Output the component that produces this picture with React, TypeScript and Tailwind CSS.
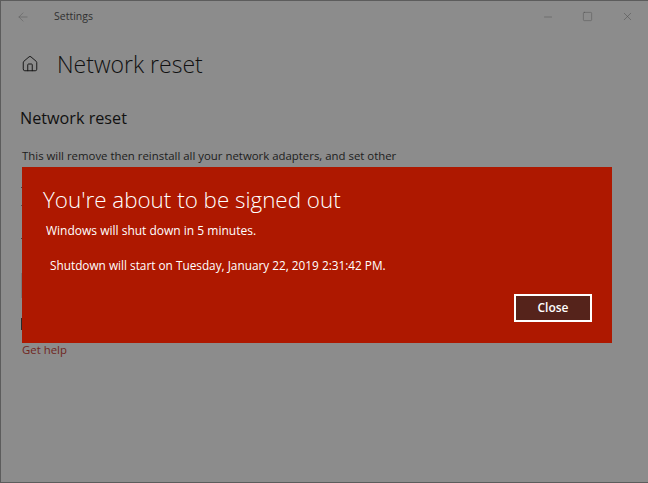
import { ArrowLeft, Home, Minus, Square, X } from 'lucide-react';

const segoe = 'font-["Open_Sans","Liberation_Sans",sans-serif]';

export default function App() {
  return (
    <div className={`relative w-[648px] h-[483px] overflow-hidden bg-[#8c8c8c] border-l border-t border-b border-[#5c5c5c] ${segoe}`}>
      <div className="flex items-center h-[31px] text-[#303030]">
        <div className="w-[53px] pl-[15px]">
          <ArrowLeft size={14} strokeWidth={1} className="text-[#5f5f5f]" />
        </div>
        <span className="text-[10.5px]">Settings</span>
        <div className="flex items-center ml-auto mr-[14px] gap-[28px] text-[#505050]">
          <Minus size={12} strokeWidth={1} />
          <Square size={11} strokeWidth={1} />
          <X size={13} strokeWidth={1} />
        </div>
      </div>
      <div className="flex flex-col pl-[20px]">
        <div className="flex items-center gap-[18px] mt-[17px] h-[30px] text-[#111111]">
          <Home size={18} strokeWidth={1.25} />
          <h1 className="text-[23px] font-light">Network reset</h1>
        </div>
        <h2 className="mt-[28px] -ml-[1px] text-[16.2px] leading-[22px] text-[#111111]">Network reset</h2>
        <p className="mt-[19px] ml-[1px] text-[11.4px] leading-[16px] text-[#1c1c1c]">
          This will remove then reinstall all your network adapters, and set other
        </p>
        <a className="mt-[178px] ml-[1px] text-[11.4px] leading-[16px] text-[#70271e]">Get help</a>
      </div>
      <div className="absolute left-[20px] top-[186px] w-[1px] h-[1px] bg-[#444444]" />
      <div className="absolute left-[20px] top-[204px] w-[1px] h-[1px] bg-[#555555]" />
      <div className="absolute left-[20px] top-[237px] w-[1px] h-[1px] bg-[#444444]" />
      <div className="absolute left-[20px] top-[272px] w-[1px] h-[25px] bg-[#7a7a7a]" />
      <div className="absolute left-[20px] top-[317px] w-[1px] h-[12px] bg-[#2a2a2a]" />
      <div className="absolute left-[21px] top-[166px] w-[590px] h-[176px] bg-[#ae1800] text-white">
        <div className="flex flex-col h-full pt-[19px] pl-[21px] pr-[20px]">
          <h2 className="text-[22.4px] leading-[28px] font-light">You're about to be signed out</h2>
          <p className="mt-[9px] ml-[3px] text-[12px] leading-[16px]">Windows will shut down in 5 minutes.</p>
          <p className="mt-[18px] ml-[7px] text-[11.8px] leading-[16px]">
            Shutdown will start on Tuesday, January 22, 2019 2:31:42 PM.
          </p>
          <div className="flex justify-end mt-[20px]">
            <button className="w-[78px] h-[28px] mt-[1px] border-2 border-white bg-[#55231b] text-[12px] font-semibold">
              Close
            </button>
          </div>
        </div>
      </div>
    </div>
  );
}
